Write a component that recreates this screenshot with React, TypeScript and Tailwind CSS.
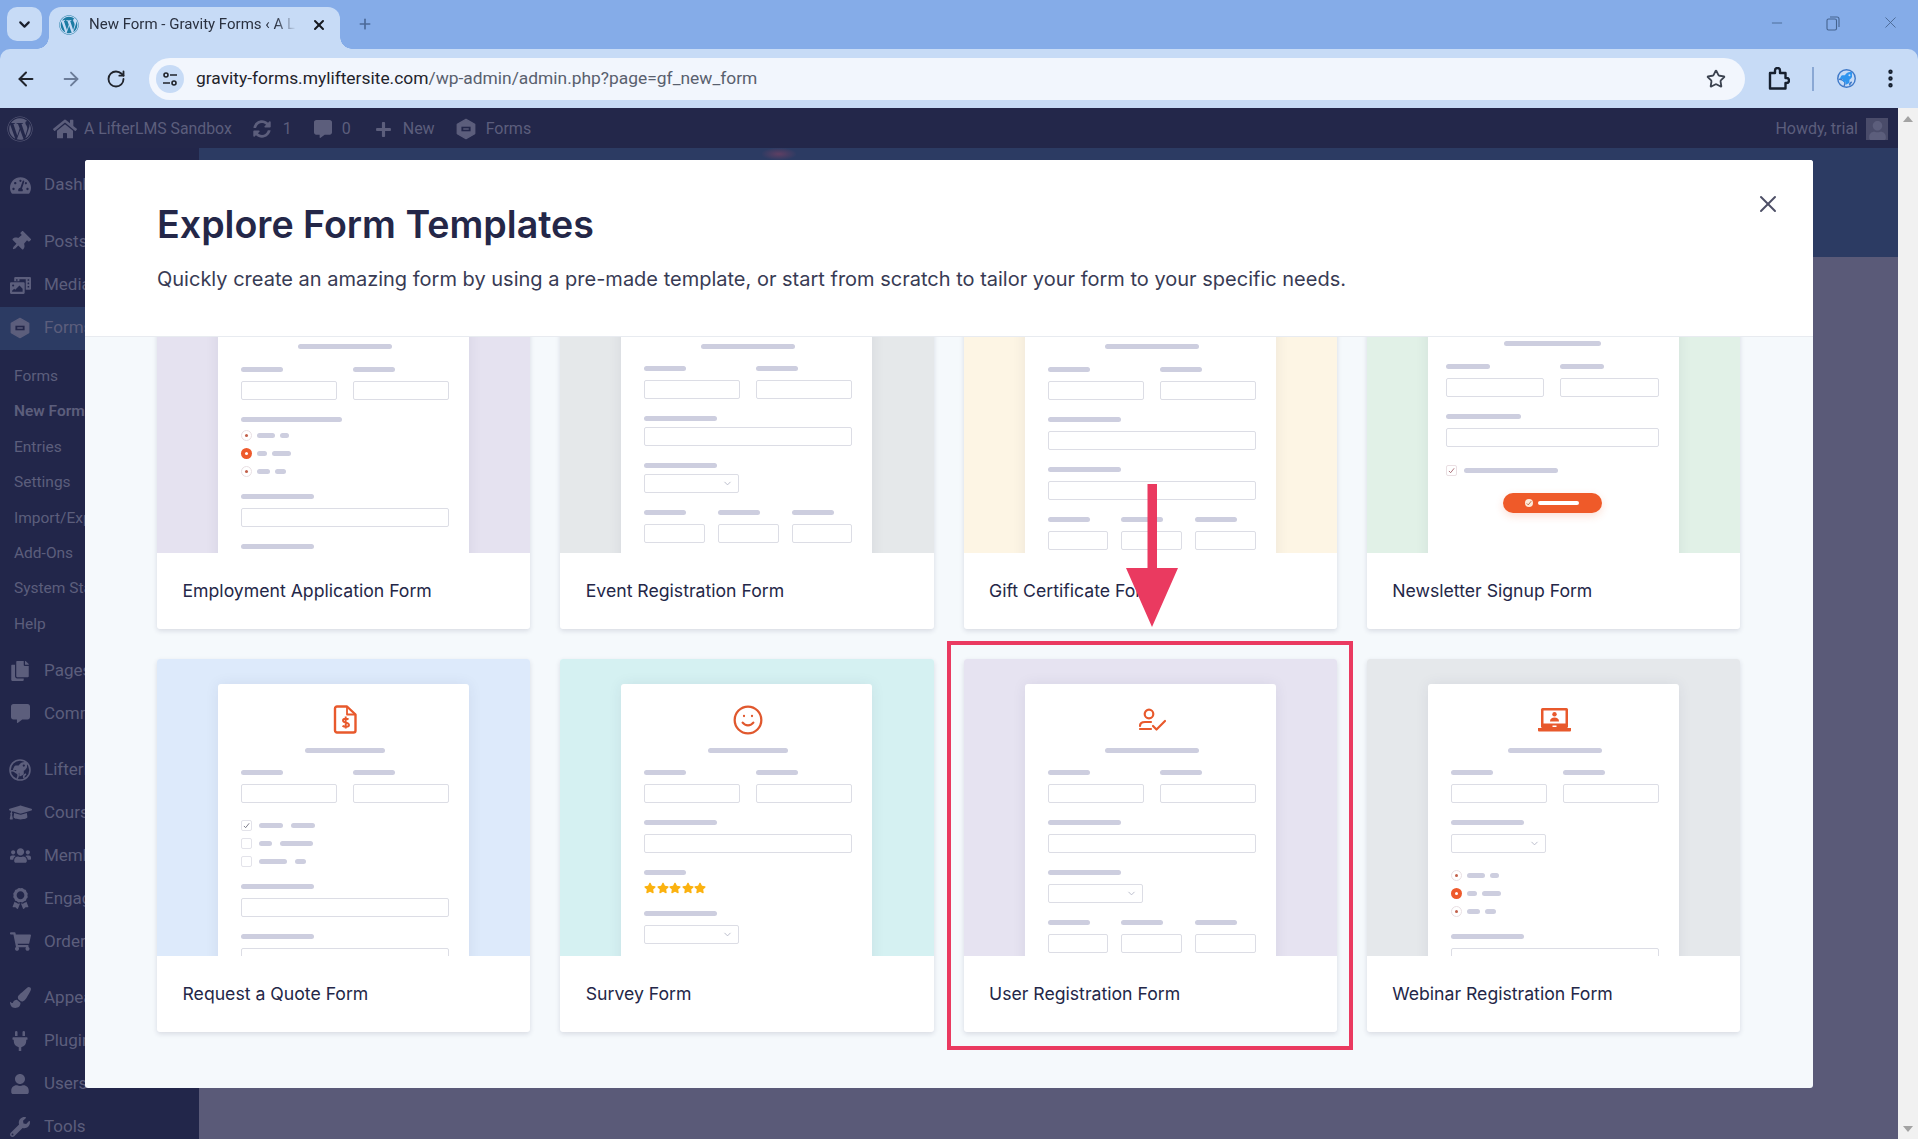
import { ReactNode } from "react";
import {
  ArrowLeft,
  ArrowRight,
  ChevronDown,
  EllipsisVertical,
  Minus,
  Plus,
  RotateCw,
  Smile,
  Star,
  X,
} from "lucide-react";
import {
  FaAward,
  FaCommentAlt,
  FaCopy,
  FaGraduationCap,
  FaHome,
  FaPaintBrush,
  FaPhotoVideo,
  FaPlug,
  FaPlus,
  FaRocket,
  FaShoppingCart,
  FaStar,
  FaSyncAlt,
  FaTachometerAlt,
  FaThumbtack,
  FaUser,
  FaUsers,
  FaWordpress,
  FaWrench,
} from "react-icons/fa";

const FormsLogo = ({ size = 22, color = "#5c5e7c" }: { size?: number; color?: string }) => (
  <svg width={size} height={size} viewBox="0 0 24 24" fill="none">
    <path d="M12 1.5 21.5 7v10L12 22.5 2.5 17V7z" fill={color} stroke={color} strokeWidth="1.5" strokeLinejoin="round" />
    <path d="M7 9.5h10v5H7z" fill="#23274a" />
    <path d="M9 12h6" stroke={color} strokeWidth="1.5" />
  </svg>
);

const RocketGlobe = ({ size, color, fill }: { size: number; color: string; fill: string }) => (
  <span className="relative flex items-center justify-center" style={{ width: size, height: size }}>
    <svg width={size} height={size} viewBox="0 0 24 24" fill="none" stroke={color} strokeWidth="1.6">
      <circle cx="12" cy="12" r="10" />
      <path d="M3 13c3-1 4 1 6 2s1 4 0 6M16 20c-1-2 0-3 2-4" />
    </svg>
    <FaRocket className="absolute" size={size * 0.6} color={fill} />
  </span>
);

const TabStrip = () => (
  <div className="h-[49px] bg-[#85ace8] flex items-end pl-[7px] shrink-0">
    <div className="h-[34px] w-[35px] mb-[8px] rounded-[10px] bg-[#c7dbf6] flex items-center justify-center text-[#1a1f2c]">
      <ChevronDown size={17} strokeWidth={3} />
    </div>
    <div className="relative h-[42px] w-[291px] ml-[7px] rounded-t-[12px] bg-[#c7dbf6] flex items-center pl-[10px] pb-[7px]">
      <span className="absolute bottom-0 right-full w-[12px] h-[12px] bg-[radial-gradient(circle_at_0_0,transparent_11.5px,#c7dbf6_12px)]" />
      <span className="absolute bottom-0 left-full w-[12px] h-[12px] bg-[radial-gradient(circle_at_100%_0,transparent_11.5px,#c7dbf6_12px)]" />
      <FaWordpress size={20} color="#1c7ba3" />
      <span className="ml-[10px] w-[207px] overflow-hidden whitespace-nowrap text-[15px] text-[#2a3140] [mask-image:linear-gradient(to_right,black_90%,transparent)]">
        New Form - Gravity Forms ‹ A L
      </span>
      <X className="absolute left-[262px] top-[10px] text-[#16191f]" size={16} strokeWidth={3} />
    </div>
    <Plus className="ml-[17px] mb-[17px] text-[#4c6a99]" size={16} strokeWidth={2.5} />
    <div className="ml-auto flex items-center gap-[40px] pr-[18px] mb-[17px] text-[#46648f]">
      <Minus size={16} strokeWidth={1.3} />
      <svg width="16" height="16" viewBox="0 0 16 16" fill="none" stroke="currentColor" strokeWidth="1.1">
        <rect x="2" y="4" width="9.5" height="11" rx="1.5" />
        <path d="M5 2h7a2 2 0 0 1 2 2v8" />
      </svg>
      <X size={19} strokeWidth={1.1} />
    </div>
  </div>
);

const Toolbar = () => (
  <div className="h-[59px] bg-[#85ace8] shrink-0">
    <div className="h-full rounded-t-[10px] bg-[#c7dbf6] flex items-center">
      <ArrowLeft className="ml-[15px] text-[#20242c]" size={22} strokeWidth={2.2} />
      <ArrowRight className="ml-[23px] text-[#6b7c98]" size={22} strokeWidth={2} />
      <RotateCw className="ml-[24px] text-[#20242c]" size={20} strokeWidth={2.2} />
      <div className="ml-[23px] w-[1596px] h-[42px] rounded-full bg-[#f2f6fd] flex items-center pl-[7px] pr-[19px]">
        <span className="w-[28px] h-[28px] rounded-full bg-[#c7dbf6] flex items-center justify-center">
          <svg width="16" height="16" viewBox="0 0 16 16" fill="none" stroke="#20242c" strokeWidth="1.6">
            <circle cx="4" cy="4" r="2" />
            <path d="M8 4h7M1 12h7" />
            <circle cx="12" cy="12" r="2" />
          </svg>
        </span>
        <span className="ml-[12px] text-[17.4px] text-[#1f232b] whitespace-nowrap">
          gravity-forms.myliftersite.com<span className="text-[#59606e]">/wp-admin/admin.php?page=gf_new_form</span>
        </span>
        <Star className="ml-auto text-[#3c4350]" size={20} strokeWidth={2.2} />
      </div>
      <svg className="ml-[23px] text-[#16202f]" width="22" height="24" viewBox="0 0 22 24" fill="none" stroke="currentColor" strokeWidth="2.4" strokeLinejoin="round">
        <path d="M2 6h5V3.500a2.500 2.500 0 0 1 5 0V6h5.500v5h1a2.500 2.500 0 0 1 0 5h-1v5.500H2z" />
      </svg>
      <span className="ml-[22px] w-[1.5px] h-[24px] bg-[#8aa8d4]" />
      <span className="ml-[22px]">
        <RocketGlobe size={21} color="#3f79c8" fill="#2f95ef" />
      </span>
      <EllipsisVertical className="ml-[22px] text-[#16202f]" size={23} strokeWidth={2.6} />
    </div>
  </div>
);

const AdminBar = () => (
  <div className="h-[40px] bg-[#23274a] shrink-0 flex items-center pl-[7px] pr-[10px] pt-[2px] text-[16px] text-[#5c5e7c]">
    <FaWordpress size={26} />
    <FaHome className="ml-[20px]" size={24} />
    <span className="ml-[7px] text-[15.8px]">A LifterLMS Sandbox</span>
    <FaSyncAlt className="ml-[21px]" size={18} />
    <span className="ml-[12px]">1</span>
    <FaCommentAlt className="ml-[22px]" size={18} />
    <span className="ml-[10px]">0</span>
    <FaPlus className="ml-[24px]" size={17} />
    <span className="ml-[11px]">New</span>
    <span className="ml-[20px]">
      <FormsLogo />
    </span>
    <span className="ml-[9px]">Forms</span>
    <span className="ml-auto">Howdy, trial</span>
    <span className="ml-[8px] w-[22px] h-[22px] bg-[#4a4c6a] flex items-end justify-center overflow-hidden">
      <FaUser size={19} color="#5c5e7c" />
    </span>
  </div>
);

const MenuItem = ({ icon, label, active }: { icon: ReactNode; label: string; active?: boolean }) => (
  <div className={`h-[43px] flex items-center ${active ? "bg-[#2c3b63] h-[41.5px]" : ""}`}>
    <span className="w-[44px] flex justify-center pr-[4px]">{icon}</span>
    <span className="whitespace-nowrap">{label}</span>
  </div>
);

const subMenu = ["Forms", "New Form", "Entries", "Settings", "Import/Export", "Add-Ons", "System Status", "Help"];

const Sidebar = () => (
  <div className="w-[199px] bg-[#22264a] pt-[15.5px] text-[17px] text-[#5c5e7c] shrink-0">
    <MenuItem icon={<FaTachometerAlt size={21} />} label="Dashboard" />
    <div className="h-[14px]" />
    <MenuItem icon={<FaThumbtack className="rotate-45" size={20} />} label="Posts" />
    <MenuItem icon={<FaPhotoVideo size={21} />} label="Media" />
    <MenuItem active icon={<FormsLogo />} label="Forms" />
    <div className="pt-[9.5px] pb-[7px] pl-[14px] text-[15.5px]">
      {subMenu.map((s) => (
        <div key={s} className={`h-[35.4px] flex items-center ${s === "New Form" ? "font-semibold" : ""}`}>
          {s}
        </div>
      ))}
    </div>
    <MenuItem icon={<FaCopy size={20} />} label="Pages" />
    <MenuItem icon={<FaCommentAlt size={19} />} label="Comments" />
    <div className="h-[13px]" />
    <MenuItem icon={<RocketGlobe size={24} color="#5c5e7c" fill="#5c5e7c" />} label="LifterLMS" />
    <MenuItem icon={<FaGraduationCap size={23} />} label="Courses" />
    <MenuItem icon={<FaUsers size={21} />} label="Memberships" />
    <MenuItem icon={<FaAward size={21} />} label="Engagements" />
    <MenuItem icon={<FaShoppingCart size={21} />} label="Orders" />
    <div className="h-[13px]" />
    <MenuItem icon={<FaPaintBrush size={21} />} label="Appearance" />
    <MenuItem icon={<FaPlug size={20} />} label="Plugins" />
    <MenuItem icon={<FaUser size={20} />} label="Users" />
    <MenuItem icon={<FaWrench size={20} />} label="Tools" />
  </div>
);

const Bar = ({ className = "" }: { className?: string }) => (
  <div className={`h-[5px] rounded-full bg-[#cdcedf] ${className}`} />
);

const Field = ({ className = "w-full" }: { className?: string }) => (
  <div className={`h-[19px] rounded-[2px] border-[1.5px] border-[#dcdde5] bg-white shrink-0 ${className}`} />
);

const Select = () => (
  <div className="relative h-[19px] w-[95px] rounded-[2px] border-[1.5px] border-[#dcdde5] bg-white">
    <ChevronDown className="absolute right-[5px] top-[3px] text-[#b6b8c8]" size={11} strokeWidth={2} />
  </div>
);

const Group = ({ children, label = "w-[73px]", gap = "gap-[9px]" }: { children: ReactNode; label?: string; gap?: string }) => (
  <div className={`flex flex-col ${gap}`}>
    <Bar className={label} />
    {children}
  </div>
);

const Names = ({ gap = "gap-[9px]" }: { gap?: string }) => (
  <div className="grid grid-cols-2 gap-x-[16px]">
    <Group label="w-[42px]" gap={gap}>
      <Field />
    </Group>
    <Group label="w-[42px]" gap={gap}>
      <Field />
    </Group>
  </div>
);

const Triple = ({ gap = "gap-[9px]" }: { gap?: string }) => (
  <div className="grid grid-cols-3 gap-x-[13px]">
    <Group label="w-[42px]" gap={gap}>
      <Field />
    </Group>
    <Group label="w-[42px]" gap={gap}>
      <Field />
    </Group>
    <Group label="w-[42px]" gap={gap}>
      <Field />
    </Group>
  </div>
);

const Radio = ({ on, a, b }: { on?: boolean; a: string; b: string }) => (
  <div className="h-[11px] flex items-center">
    {on ? (
      <span className="w-[11px] h-[11px] rounded-full bg-[#ee5a2c] flex items-center justify-center">
        <span className="w-[3px] h-[3px] rounded-full bg-white" />
      </span>
    ) : (
      <span className="w-[11px] h-[11px] rounded-full border border-[#e9dfe3] flex items-center justify-center">
        <span className="w-[3px] h-[3px] rounded-full bg-[#c2604a]" />
      </span>
    )}
    <Bar className={`ml-[5px] ${a}`} />
    <Bar className={`ml-[5px] ${b}`} />
  </div>
);

const Radios = () => (
  <div className="flex flex-col gap-[7px]">
    <Radio a="w-[18px]" b="w-[9px]" />
    <Radio on a="w-[10px]" b="w-[19px]" />
    <Radio a="w-[13px]" b="w-[11px]" />
  </div>
);

const Check = ({ on, a, b }: { on?: boolean; a: string; b: string }) => (
  <div className="h-[11px] flex items-center">
    <span className="w-[11px] h-[11px] rounded-[2px] border border-[#e3e3ea] flex items-center justify-center">
      {on && (
        <svg width="7" height="7" viewBox="0 0 8 8" fill="none" stroke="#6b6b7c" strokeWidth="1">
          <path d="M1 4.5 3 6.5 7 1.5" />
        </svg>
      )}
    </span>
    <Bar className={`ml-[7px] ${a}`} />
    <Bar className={`ml-[8px] ${b}`} />
  </div>
);

const QuoteIcon = () => (
  <svg width="24" height="29" viewBox="0 0 24 29" fill="none" stroke="#e8592c" strokeWidth="2.4" strokeLinejoin="round">
    <path d="M4 1.5h10l8.500 8v16a2 2 0 0 1-2 2H4a2 2 0 0 1-2-2v-22a2 2 0 0 1 2-2z" />
    <path d="M14 1.500v8h8.500" strokeWidth="1.800" />
    <path d="M15.500 14.500c-1-1-5.500-1.500-5.500 1 0 3 6 1.500 6 4.500 0 2.500-5 2-6.500.8M12.700 11.500v12" strokeWidth="1.900" />
  </svg>
);

const UserCheckIcon = () => (
  <svg width="30" height="24" viewBox="0 0 30 24" fill="none" stroke="#e8592c" strokeWidth="2.200" strokeLinecap="round" strokeLinejoin="round">
    <circle cx="12" cy="6" r="4.300" />
    <path d="M14 14H8c-3.500 0-5 2-5 4M3 21h11" />
    <path d="M16 18l3.500 3.500L28 13" />
  </svg>
);

const WebinarIcon = () => (
  <svg width="33" height="26" viewBox="0 0 33 26" fill="none">
    <rect x="3" y="1" width="27" height="20" rx="1.500" fill="#e8592c" />
    <rect x="5.500" y="3.500" width="22" height="13" fill="#fff" />
    <circle cx="16.500" cy="7.300" r="2.200" fill="#e8592c" />
    <path d="M12 14.500c0-3 2-4 4.500-4s4.500 1 4.500 4z" fill="#e8592c" />
    <path d="M0 21h33v2.500a1 1 0 0 1-1 1H1a1 1 0 0 1-1-1z" fill="#e8592c" />
    <rect x="14.500" y="18.500" width="4" height="1.500" fill="#fff" />
  </svg>
);

const Card = ({
  title,
  bg,
  top,
  pad = "pl-[23px]",
  children,
}: {
  title: string;
  bg: string;
  top: ReactNode;
  pad?: string;
  children: ReactNode;
}) => (
  <div className="h-[373px] rounded-[3px] overflow-hidden shadow-[0_2px_5px_rgba(40,45,80,0.14)] flex flex-col bg-white">
    <div className={`h-[297px] shrink-0 overflow-hidden pt-[25px] ${bg}`}>
      <div className={`mx-auto w-[251px] h-[400px] rounded-[3px] bg-white pr-[20px] shadow-[0_0_14px_rgba(50,55,90,0.08)] ${pad}`}>
        {top}
        {children}
      </div>
    </div>
    <div className="flex-1 flex items-center pl-[25.5px] pt-[1px] text-[17.65px] text-[#242748]">{title}</div>
  </div>
);

const Stack = ({ children, mt = "mt-[16.5px]" }: { children: ReactNode; mt?: string }) => (
  <div className={`flex flex-col gap-[17px] ${mt}`}>{children}</div>
);

const Clipped = ({ w, pt = "pt-[63px]" }: { w: string; pt?: string }) => (
  <div className={pt}>
    <Bar className={`mx-auto ${w}`} />
  </div>
);

const Head = ({ icon, w }: { icon: ReactNode; w: string }) => (
  <div className="pt-[21px]">
    <div className="h-[29px] flex items-center justify-center">{icon}</div>
    <Bar className={`mx-auto mt-[14px] ${w}`} />
  </div>
);

const Grid = () => (
  <div className="grid grid-cols-4 gap-x-[30px] gap-y-[30px] -mt-[81px] pl-[72px] pr-[73px]">
    <Card title="Employment Application Form" bg="bg-[#e5e2f0]" top={<Clipped w="w-[94px]" />}>
      <Stack mt="mt-[17.5px]">
        <Names />
        <div className="flex flex-col gap-[8px]">
          <Bar className="w-[101px]" />
          <Radios />
        </div>
        <Group>
          <Field />
        </Group>
        <Group>
          <Field />
        </Group>
      </Stack>
    </Card>
    <Card title="Event Registration Form" bg="bg-[#e5e8ea]" top={<Clipped w="w-[94px]" />}>
      <Stack mt="mt-[17px]">
        <Names />
        <Group gap="gap-[6px]">
          <Field />
        </Group>
        <Group gap="gap-[6px]">
          <Select />
        </Group>
        <Triple />
      </Stack>
    </Card>
    <Card title="Gift Certificate Form" bg="bg-[#fdf5e4]" top={<Clipped w="w-[94px]" />}>
      <Stack mt="mt-[17.5px]">
        <Names />
        <Group>
          <Field />
        </Group>
        <Group>
          <Field />
        </Group>
        <Triple />
      </Stack>
    </Card>
    <Card title="Newsletter Signup Form" bg="bg-[#e1f1e7]" pad="pl-[18px]" top={<Clipped w="w-[97px]" pt="pt-[59.5px]" />}>
      <div className="flex flex-col gap-[17px] mt-[18px]">
        <div className="grid grid-cols-2 gap-x-[16px]">
          <Group label="w-[44px]">
            <Field />
          </Group>
          <Group label="w-[44px]">
            <Field />
          </Group>
        </div>
        <Group label="w-[75px]">
          <Field />
        </Group>
        <div className="flex items-center h-[11px] mt-[1.5px]">
          <span className="w-[11px] h-[11px] rounded-[2px] border border-[#eadfe3] flex items-center justify-center">
            <svg width="7" height="7" viewBox="0 0 8 8" fill="none" stroke="#a0606a" strokeWidth="1">
              <path d="M1 4.500 3 6.500 7 1.500" />
            </svg>
          </span>
          <Bar className="ml-[7px] w-[94px]" />
        </div>
        <div className="mx-auto w-[99px] h-[20px] rounded-full bg-[#ef5a29] flex items-center justify-center gap-[5px] shadow-[0_3px_8px_rgba(239,90,41,0.2)]">
          <span className="w-[8px] h-[8px] rounded-full bg-[#fde9d9] flex items-center justify-center">
            <svg width="6" height="6" viewBox="0 0 8 8" fill="none" stroke="#b9683f" strokeWidth="1.200">
              <path d="M1 4.500 3 6.500 7 1.500" />
            </svg>
          </span>
          <span className="w-[41px] h-[4px] rounded-full bg-white" />
        </div>
      </div>
    </Card>
    <Card title="Request a Quote Form" bg="bg-[#ddeafb]" top={<Head icon={<QuoteIcon />} w="w-[80px]" />}>
      <Stack>
        <Names />
        <div className="flex flex-col gap-[7px]">
          <Check on a="w-[24px]" b="w-[24px]" />
          <Check a="w-[13px]" b="w-[33px]" />
          <Check a="w-[28px]" b="w-[11px]" />
        </div>
        <Group>
          <Field />
        </Group>
        <Group>
          <Field />
        </Group>
      </Stack>
    </Card>
    <Card title="Survey Form" bg="bg-[#d5f1f2]" top={<Head icon={<Smile size={32} color="#e0582e" strokeWidth={1.7} />} w="w-[80px]" />}>
      <Stack>
        <Names />
        <Group>
          <Field />
        </Group>
        <div className="flex flex-col gap-[7.5px]">
          <Bar className="w-[42px]" />
          <div className="flex gap-[0.5px] text-[#fbb210]">
            <FaStar size={12} />
            <FaStar size={12} />
            <FaStar size={12} />
            <FaStar size={12} />
            <FaStar size={12} />
          </div>
        </div>
        <Group>
          <Select />
        </Group>
      </Stack>
    </Card>
    <Card title="User Registration Form" bg="bg-[#e6e3f1]" top={<Head icon={<UserCheckIcon />} w="w-[94px]" />}>
      <Stack>
        <Names />
        <Group>
          <Field />
        </Group>
        <Group>
          <Select />
        </Group>
        <Triple />
      </Stack>
    </Card>
    <Card title="Webinar Registration Form" bg="bg-[#e5e8eb]" top={<Head icon={<WebinarIcon />} w="w-[94px]" />}>
      <Stack>
        <Names />
        <Group>
          <Select />
        </Group>
        <Radios />
        <Group>
          <Field />
        </Group>
      </Stack>
    </Card>
  </div>
);

const Modal = () => (
  <div className="absolute left-[85px] top-[52px] w-[1728px] h-[928px] rounded-[3px] overflow-hidden bg-[#f5f9fc] flex flex-col font-['Inter',sans-serif]">
    <div className="relative z-10 h-[177px] shrink-0 bg-white border-b border-[#e8ebf0] pl-[72px] pt-[43px]">
      <h1 className="text-[37.6px] leading-[44px] font-semibold text-[#242748]">Explore Form Templates</h1>
      <p className="mt-[18px] text-[20px] leading-[28px] text-[#383b54]">
        Quickly create an amazing form by using a pre-made template, or start from scratch to tailor your form to your specific needs.
      </p>
      <X className="absolute left-[1669px] top-[30px] text-[#4d4f66]" size={28} strokeWidth={1.7} />
    </div>
    <div className="flex-1 min-h-0 overflow-hidden">
      <Grid />
    </div>
  </div>
);

const Scrollbar = () => (
  <div className="w-[20px] bg-[#f1f1f1] shrink-0 flex flex-col items-center justify-between pt-[8px] pb-[7px]">
    <span className="w-0 h-0 border-x-[5px] border-x-transparent border-b-[6px] border-b-[#a3a3a3]" />
    <span className="w-0 h-0 border-x-[5px] border-x-transparent border-t-[6px] border-t-[#a3a3a3]" />
  </div>
);

export default function App() {
  return (
    <div className="relative w-[1918px] h-[1139px] overflow-hidden flex flex-col font-['Roboto',sans-serif]">
      <TabStrip />
      <Toolbar />
      <div className="relative flex-1 min-h-0 flex">
        <div className="flex-1 min-w-0 flex flex-col">
          <AdminBar />
          <div className="flex-1 min-h-0 flex">
            <Sidebar />
            <div className="flex-1 flex flex-col bg-[#5a5a78]">
              <div className="h-[109px] bg-[#2c3b63] pl-[563px]">
                <div className="w-[34px] h-[12px] bg-[radial-gradient(ellipse_at_center,#5f3f63,transparent_75%)]" />
              </div>
            </div>
          </div>
        </div>
        <Scrollbar />
        <Modal />
      </div>
      <div className="absolute left-[947px] top-[641px] w-[406px] h-[409px] border-4 border-[#ea3a60]" />
      <svg className="absolute left-[1126px] top-[484px]" width="52" height="143" viewBox="0 0 52 143">
        <path d="M21.5 0h9.500v84H52L26 143 0 84h21.500z" fill="#ea3a60" />
      </svg>
    </div>
  );
}
